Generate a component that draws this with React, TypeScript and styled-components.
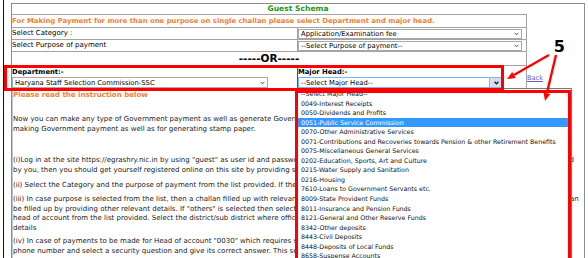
import React from 'react';
import styled, { createGlobalStyle } from 'styled-components';

const GlobalStyle = createGlobalStyle`
  html, body { margin: 0; padding: 0; background: #ffffff; }
  body { font-family: "DejaVu Sans", Verdana, sans-serif; color: #000; overflow: hidden; }
`;

const ORANGE = '#ef8232';
const CELL = '#a3a3a3';
const RED = '#ff0000';

const Root = styled.div`
  position: relative;
  width: 588px;
  height: 258px;
  overflow: hidden;
`;

const Page = styled.div`
  box-sizing: border-box;
  width: 585px;
  height: 258px;
  margin-left: 3px;
  border-left: 1px solid #111;
  padding: 3px 3px 0 7px;
`;

const Frame = styled.div`
  box-sizing: border-box;
  width: 574px;
  height: 255px;
  border: 1px solid #8e8e8e;
  border-bottom: none;
`;

const TitleRow = styled.div`
  height: 10px;
  line-height: 10px;
  text-align: center;
  font-weight: bold;
  font-size: 7.6px;
  color: #1c9a1c;
`;

const FormRow = styled.div`
  display: flex;
`;

const FormTable = styled.div`
  box-sizing: border-box;
  width: 515px;
  border-top: 1px solid ${CELL};
  border-right: 1px solid ${CELL};
`;

const NoticeRow = styled.div`
  box-sizing: border-box;
  height: 13px;
  line-height: 12px;
  border-bottom: 1px solid ${CELL};
  font-weight: bold;
  font-size: 6.9px;
  color: ${ORANGE};
  white-space: nowrap;
`;

const FieldRow = styled.div`
  display: flex;
  box-sizing: border-box;
  height: 12px;
  border-bottom: 1px solid ${CELL};
`;

const LabelCell = styled.div`
  width: 285px;
  font-size: 7px;
  line-height: 11px;
  white-space: nowrap;
`;

const ControlCell = styled.div`
  flex: 1;
  display: flex;
  align-items: center;
  border-left: 1px solid ${CELL};
`;

const OrRow = styled.div`
  box-sizing: border-box;
  height: 14px;
  line-height: 13px;
  border-bottom: 1px solid ${CELL};
  text-align: center;
  font-weight: bold;
  font-size: 10.5px;
`;

const HeadRow = styled.div`
  display: flex;
  box-sizing: border-box;
  height: 23px;
  border-bottom: 1px solid ${CELL};
`;

const HeadCell = styled.div<{ $divider?: boolean }>`
  display: flex;
  flex-direction: column;
  padding-top: 1px;
  ${(p) => (p.$divider ? `flex: 1; border-left: 1px solid #555;` : `width: 285px;`)}
`;

const FieldLabel = styled.div`
  font-weight: bold;
  font-size: 6.8px;
  line-height: 10px;
  white-space: nowrap;
`;

const SelectBox = styled.div<{ $w: number; $h: number; $focused?: boolean }>`
  box-sizing: border-box;
  display: flex;
  align-items: stretch;
  width: ${(p) => p.$w}px;
  height: ${(p) => p.$h}px;
  border: 1px solid ${(p) => (p.$focused ? '#7eb4ea' : '#a9a9a9')};
  background: #fff;
`;

const SelectText = styled.span`
  flex: 1;
  display: flex;
  align-items: center;
  padding-left: 2px;
  font-size: 6.8px;
  white-space: nowrap;
  overflow: hidden;
`;

const SelectArrow = styled.span<{ $focused?: boolean }>`
  display: flex;
  align-items: center;
  justify-content: center;
  width: ${(p) => (p.$focused ? 12 : 10)}px;
  background: ${(p) => (p.$focused ? '#d5dfeb' : 'transparent')};
  border-left: ${(p) => (p.$focused ? '1px solid #8fb6e0' : 'none')};
`;

const BackCell = styled.div`
  flex: 1;
  display: flex;
  align-items: flex-end;
  padding-bottom: 6.5px;
`;

const BackLink = styled.a`
  color: #6a5acd;
  font-size: 6.6px;
  line-height: 9px;
  text-decoration: underline;
`;

const Instructions = styled.div`
  border-left: 1px solid #c6c6c6;
  padding-top: 1.25px;
  height: 200px;
`;

const InstructionTitle = styled.div`
  font-weight: bold;
  font-size: 7.1px;
  line-height: 9.5px;
  color: ${ORANGE};
  white-space: nowrap;
`;

const Para = styled.p<{ $gap: number }>`
  margin: ${(p) => p.$gap}px 0 0 0;
  font-size: 7px;
  line-height: 9.5px;
  color: #222;
  white-space: nowrap;
`;

const OptionList = styled.div`
  position: absolute;
  left: 297px;
  top: 88px;
  box-sizing: border-box;
  width: 275px;
  height: 190px;
  background: #fff;
  border: 1px solid #7a7a7a;
`;

const OptionItem = styled.div<{ $active?: boolean }>`
  height: 9.55px;
  line-height: 9.55px;
  padding-left: 3px;
  font-size: 6.3px;
  white-space: nowrap;
  color: ${(p) => (p.$active ? '#fff' : '#111')};
  background: ${(p) => (p.$active ? '#3399ff' : 'transparent')};
`;

const RedBox = styled.div<{ $l: number; $t: number; $w: number; $h: number }>`
  position: absolute;
  box-sizing: border-box;
  left: ${(p) => p.$l}px;
  top: ${(p) => p.$t}px;
  width: ${(p) => p.$w}px;
  height: ${(p) => p.$h}px;
  border: 3px solid ${RED};
`;

const ArrowLayer = styled.svg`
  position: absolute;
  left: 0;
  top: 0;
`;

const StepNumber = styled.div`
  position: absolute;
  left: 553.7px;
  top: 38.5px;
  font-weight: bold;
  font-size: 16px;
  line-height: 16px;
  color: #000;
`;

const Chevron = ({ dark }: { dark?: boolean }) => (
  <svg width="5" height="4" viewBox="0 0 5 4">
    <polyline
      points="0.6,0.8 2.5,2.9 4.4,0.8"
      fill="none"
      stroke={dark ? '#111' : '#555'}
      strokeWidth={dark ? 1.3 : 1}
    />
  </svg>
);

type SelectProps = { w: number; h: number; text: string; focused?: boolean };
const FakeSelect = ({ w, h, text, focused }: SelectProps) => (
  <SelectBox $w={w} $h={h} $focused={focused}>
    <SelectText>{text}</SelectText>
    <SelectArrow $focused={focused}>
      <Chevron dark={focused} />
    </SelectArrow>
  </SelectBox>
);

const majorHeads = [
  '--Select Major Head--',
  '0049-Interest Receipts',
  '0050-Dividends and Profits',
  '0051-Public Service Commission',
  '0070-Other Administrative Services',
  '0071-Contributions and Recoveries towards Pension & other Retirement Benefits',
  '0075-Miscellaneous General Services',
  '0202-Education, Sports, Art and Culture',
  '0215-Water Supply and Sanitation',
  '0216-Housing',
  '7610-Loans to Government Servants etc.',
  '8009-State Provident Funds',
  '8011-Insurance and Pension Funds',
  '8121-General and Other Reserve Funds',
  '8342-Other deposits',
  '8443-Civil Deposits',
  '8448-Deposits of Local Funds',
  '8658-Suspense Accounts',
  '8782-Cash Remittances',
];

export default function App() {
  return (
    <Root>
      <GlobalStyle />
      <Page>
        <Frame>
          <TitleRow>Guest Schema</TitleRow>
          <FormRow>
            <FormTable>
              <NoticeRow>
                For Making Payment for more than one purpose on single challan please select Department and major head.
              </NoticeRow>
              <FieldRow>
                <LabelCell>Select Category :</LabelCell>
                <ControlCell>
                  <FakeSelect w={224} h={10} text="Application/Examination fee" />
                </ControlCell>
              </FieldRow>
              <FieldRow>
                <LabelCell>Select Purpose of payment</LabelCell>
                <ControlCell>
                  <FakeSelect w={224} h={10} text="--Select Purpose of payment--" />
                </ControlCell>
              </FieldRow>
              <OrRow>-----OR-----</OrRow>
              <HeadRow>
                <HeadCell>
                  <FieldLabel>Department:-</FieldLabel>
                  <FakeSelect w={256} h={11} text="Haryana Staff Selection Commission-SSC" />
                </HeadCell>
                <HeadCell $divider>
                  <FieldLabel>Major Head:-</FieldLabel>
                  <FakeSelect w={205} h={11} text="--Select Major Head--" focused />
                </HeadCell>
              </HeadRow>
            </FormTable>
            <BackCell>
              <BackLink href="#">Back</BackLink>
            </BackCell>
          </FormRow>
          <Instructions>
            <InstructionTitle>Please read the instruction below</InstructionTitle>
            <Para $gap={15.5}>
              Now you can make any type of Government payment as well as generate Government stamp paper. The following procedure is to be followed for
              <br />
              making Government payment as well as for generating stamp paper.
            </Para>
            <Para $gap={22}>
              (i)Log in at the site https://egrashry.nic.in by using "guest" as user id and password as "guest". In case you would like to use your own user name and password
              <br />
              by you, then you should get yourself registered online on this site by providing some basic information.
            </Para>
            <Para $gap={6}>
              (ii) Select the Category and the purpose of payment from the list provided. If the purpose is not listed, select "others".
            </Para>
            <Para $gap={4.5}>
              (iii) In case purpose is selected from the list, then a challan filled up with relevant details will be generated. In case "others" is selected, a blank challan form can
              <br />
              be filled up by providing other relevant details. If "others" is selected then select the department and the
              <br />
              head of account from the list provided. Select the district/sub district where office is located and other
              <br />
              details
            </Para>
            <Para $gap={4}>
              (iv) In case of payments to be made for Head of account "0030" which requires stamp paper, provide your
              <br />
              phone number and select a security question and give its correct answer. This security question is used.
            </Para>
          </Instructions>
        </Frame>
      </Page>

      <OptionList>
        {majorHeads.map((h) => (
          <OptionItem key={h} $active={h.startsWith('0051')}>
            {h}
          </OptionItem>
        ))}
      </OptionList>

      <RedBox $l={4} $t={65} $w={500} $h={26} />
      <RedBox $l={295} $t={90} $w={276} $h={190} />

      <ArrowLayer width="588" height="258" viewBox="0 0 588 258">
        <line x1="549" y1="55" x2="513.9" y2="75" stroke={RED} strokeWidth="2.4" />
        <polygon points="507,79 515.7,78.1 512.2,72" fill={RED} />
        <line x1="556" y1="55" x2="546.9" y2="93.2" stroke={RED} strokeWidth="2.4" />
        <polygon points="545,101 550.3,94 543.5,92.4" fill={RED} />
      </ArrowLayer>
      <StepNumber>5</StepNumber>
    </Root>
  );
}
